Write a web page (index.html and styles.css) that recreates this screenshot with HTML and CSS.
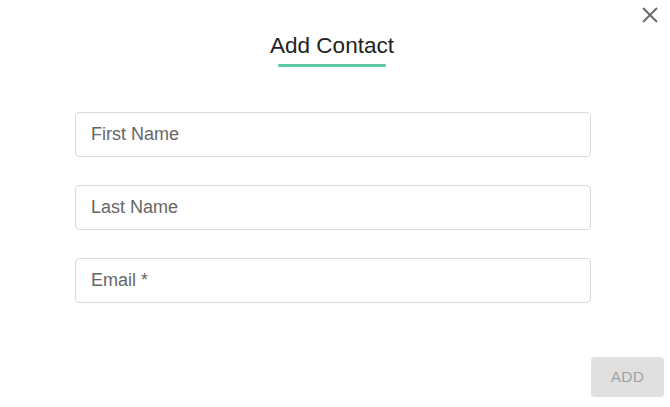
FILE: index.html
```html
<!DOCTYPE html>
<html>
<head>
<meta charset="utf-8">
<link rel="stylesheet" href="styles.css">
</head>
<body>
<div class="dialog">
  <button class="close" aria-label="Close">
    <svg width="18" height="18" viewBox="0 0 18 18"><path d="M2 2 L16 16 M16 2 L2 16" stroke="#6b6b6b" stroke-width="2" fill="none"/></svg>
  </button>
  <div class="header">
    <h1 class="title">Add Contact</h1>
    <div class="underline"></div>
  </div>
  <form class="form">
    <input class="field" type="text" placeholder="First Name">
    <input class="field" type="text" placeholder="Last Name">
    <input class="field" type="email" placeholder="Email *">
  </form>
  <div class="actions">
    <button class="add" disabled>ADD</button>
  </div>
</div>
</body>
</html>
```
FILE: styles.css
```css
* { box-sizing: border-box; }
html, body { margin: 0; padding: 0; background: #fff; }
body { font-family: "Liberation Sans", Arial, sans-serif; }
.dialog {
  position: relative;
  width: 670px;
  height: 407px;
  padding: 0 6px 0 0;
  display: flex;
  flex-direction: column;
}
.close {
  position: absolute;
  top: 6px;
  right: 11px;
  width: 18px;
  height: 18px;
  padding: 0;
  border: 0;
  background: none;
  cursor: pointer;
}
.close svg { display: block; }
.header {
  display: flex;
  flex-direction: column;
  align-items: center;
  padding-top: 33px;
}
.title {
  margin: 0;
  font-weight: normal;
  font-size: 22.5px;
  line-height: 26px;
  color: #222;
}
.underline {
  margin-top: 5px;
  width: 108px;
  height: 3px;
  background: #5ec8a4;
  border-radius: 1px;
}
.form {
  margin: 45px 0 0 75px;
  width: 516px;
  display: flex;
  flex-direction: column;
  gap: 28px;
}
.field {
  display: block;
  width: 516px;
  height: 45px;
  border: 1px solid #d9d9d9;
  border-radius: 4px;
  padding: 0 15px;
  font-family: "Liberation Sans", Arial, sans-serif;
  font-size: 18px;
  color: #333;
  outline: none;
}
.field::placeholder { color: #666; opacity: 1; }
.actions {
  margin-top: auto;
  display: flex;
  justify-content: flex-end;
  padding-bottom: 10px;
}
.add {
  width: 73px;
  height: 40px;
  border: 0;
  border-radius: 4px;
  background: #e0e0e0;
  color: #a2a2a2;
  font-family: "Liberation Sans", Arial, sans-serif;
  font-size: 15.5px;
  letter-spacing: 0.3px;
}
```
